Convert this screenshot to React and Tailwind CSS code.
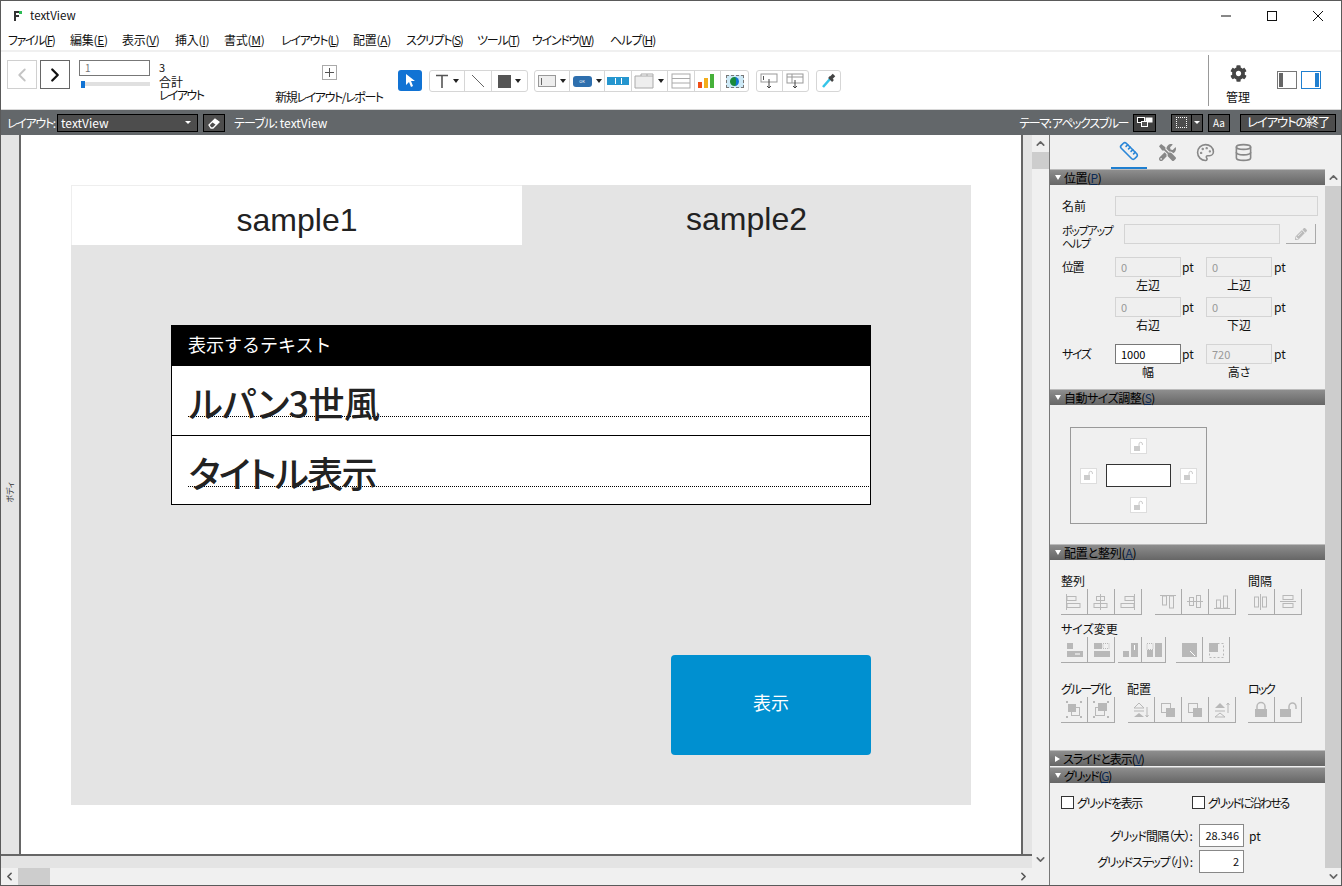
import React from "react";
import { ChevronLeft, ChevronRight, ChevronUp, ChevronDown, Ruler, Palette, Database } from "lucide-react";
import { FaCog, FaTools, FaPencilAlt } from "react-icons/fa";

const font = "font-['Noto_Sans_CJK_JP',sans-serif] [font-feature-settings:'palt']";

function Menu({ name, k, className }) {
  return (
    <span className={"shrink-0 " + className}>
      {name}(<span className="underline">{k}</span>)
    </span>
  );
}

function Caret() {
  return <span className="w-0 h-0 border-x-[3px] border-x-transparent border-t-[4px] border-t-[#222] shrink-0" />;
}

function Tool({ w, caret, children, last }) {
  return (
    <div className={"h-full flex items-center justify-center gap-[4px] " + (last ? "" : "border-r border-[#d6d6d6]")} style={{ width: w }}>
      {children}
      {caret && <Caret />}
    </div>
  );
}

function ToolGroup({ className, children }) {
  return <div className={"h-[22px] flex border border-[#d6d6d6] rounded-[3px] " + className}>{children}</div>;
}

function Section({ title, k, open = true, className = "tracking-[-0.5px]" }) {
  return (
    <div className={"h-[16px] shrink-0 border-t border-[#bbb] bg-gradient-to-b from-[#8e8e8e] to-[#666] flex items-center pl-[5px] gap-[3px] text-[12px] leading-none text-black " + className}>
      {open ? (
        <span className="w-0 h-0 border-x-[3px] border-x-transparent border-t-[5px] border-t-white" />
      ) : (
        <span className="w-0 h-0 border-y-[3px] border-y-transparent border-l-[5px] border-l-white" />
      )}
      <span>
        {title}(<span className="underline text-[#0c2a55]">{k}</span>)
      </span>
    </div>
  );
}

function Num({ value, active }) {
  return (
    <div className={"w-[66px] h-[20px] flex items-center pl-[5px] text-[11px] border " + (active ? "bg-white border-[#777] text-black" : "bg-[#efefef] border-[#d4d4d4] text-[#999]")}>
      {value}
    </div>
  );
}

function NumPair({ label, a, b, capA, capB, active }) {
  return (
    <div className="flex">
      <span className="w-[53px] pt-[4px] tracking-[-1.4px]">{label}</span>
      <div className="w-[91px]">
        <div className="flex items-center">
          <Num value={a} active={active} />
          <span className="ml-[1px]">pt</span>
        </div>
        <div className="w-[66px] text-center leading-[15px]">{capA}</div>
      </div>
      <div>
        <div className="flex items-center">
          <Num value={b} />
          <span className="ml-[2px]">pt</span>
        </div>
        <div className="w-[66px] text-center leading-[15px]">{capB}</div>
      </div>
    </div>
  );
}

function Lock() {
  return (
    <div className="w-[17px] h-[16px] bg-white border border-[#ddd] flex items-center justify-center">
      <svg width="11" height="11" viewBox="0 0 11 11">
        <rect x="1" y="5" width="6" height="5" fill="#ccc" />
        <path d="M6 5V3a1.7 1.7 0 0 1 3.4 0v1" fill="none" stroke="#ccc" />
      </svg>
    </div>
  );
}

// gray tool button with a small drawing inside
function Ico({ narrow, children }) {
  return (
    <div className={"h-[26px] border-r border-b border-[#aaa] flex items-center justify-center shrink-0 " + (narrow ? "w-[24px]" : "w-[27px]")}>
      <svg width="20" height="20" viewBox="0 0 20 20" fill="none" stroke="#b8b8b8">
        {children}
      </svg>
    </div>
  );
}

const alignIcons = [
  <><path d="M2.5 2v16" /><rect x="3" y="4.5" width="9" height="4" /><rect x="3" y="11.5" width="13" height="4" /></>,
  <><path d="M9.5 2v16" /><rect x="5.5" y="4.5" width="8" height="4" /><rect x="3" y="11.5" width="13" height="4" /></>,
  <><path d="M16.5 2v16" /><rect x="7" y="4.5" width="9" height="4" /><rect x="3" y="11.5" width="13" height="4" /></>,
  <><path d="M2 3.5h16" /><rect x="4.5" y="4" width="4" height="9" /><rect x="11.5" y="4" width="4" height="12" /></>,
  <><path d="M2 9.5h16" /><rect x="4.5" y="5.5" width="4" height="8" /><rect x="11.5" y="3.5" width="4" height="12" /></>,
  <><path d="M2 16.5h16" /><rect x="4.5" y="8" width="4" height="8" /><rect x="11.5" y="4" width="4" height="12" /></>,
];
const gapIcons = [
  <><path d="M9.5 2v16" /><rect x="3.5" y="5" width="4" height="10" /><rect x="11.5" y="5" width="4" height="10" /></>,
  <><path d="M2 9.5h16" /><rect x="5" y="3.5" width="10" height="4" /><rect x="5" y="11.5" width="10" height="4" /></>,
];
const fill = { fill: "#b8b8b8", stroke: "none" };
const sizeIcons = [
  <><rect x="3" y="3" width="6" height="6" {...fill} /><rect x="3" y="11" width="16" height="6" {...fill} /><path d="M11 14h5" stroke="#fff" /></>,
  <><rect x="3" y="3" width="8" height="6" {...fill} /><rect x="12" y="3.5" width="6" height="5" strokeDasharray="1 1" /><rect x="3" y="11" width="16" height="6" {...fill} /></>,
];
const sizeIcons2 = [
  <><rect x="3" y="11" width="6" height="6" {...fill} /><rect x="11" y="3" width="7" height="14" {...fill} /><path d="M14.5 5v5" stroke="#fff" /></>,
  <><rect x="3" y="3.5" width="6" height="6" strokeDasharray="1 1" /><rect x="3" y="10" width="6" height="7" {...fill} /><rect x="11" y="3" width="7" height="14" {...fill} /></>,
];
const sizeIcons3 = [
  <><rect x="3" y="3" width="15" height="14" {...fill} /><path d="M11 11l5 5" stroke="#fff" /></>,
  <><rect x="3" y="3" width="9" height="9" {...fill} /><rect x="3.5" y="3.5" width="14" height="14" strokeDasharray="2 2" /></>,
];
const groupIcons = [
  <><rect x="4" y="4" width="8" height="8" {...fill} /><rect x="7.5" y="7.5" width="8" height="8" /><path d="M2 2h2M16 2h2M2 17h2M16 17h2" strokeWidth="2" /></>,
  <><rect x="7" y="3" width="9" height="8" {...fill} /><rect x="4.5" y="7.5" width="9" height="8" /><path d="M2 2h2M16 2h2M2 17h2M16 17h2" strokeWidth="2" /></>,
];
const orderIcons = [
  <><path d="M3 8l5-5 5 5z" /><path d="M3 11h10" /><path d="M3 17l5-4 5 4z" {...fill} /><path d="M16 7v10M14.5 15l1.5 2 1.5-2" /></>,
  <><rect x="3.5" y="3.5" width="9" height="9" /><rect x="8" y="8" width="9" height="9" {...fill} /></>,
  <><rect x="3.5" y="3.5" width="9" height="9" /><rect x="8" y="8" width="9" height="9" {...fill} /></>,
  <><path d="M3 8l5-5 5 5z" {...fill} /><path d="M3 11h10" /><path d="M3 17l5-4 5 4z" /><path d="M16 3v10M14.5 5l1.5-2 1.5 2" /></>,
];
const lockIcons = [
  <><rect x="4" y="9" width="12" height="8" {...fill} /><path d="M6 9V6.5a4 4 0 0 1 8 0V9" strokeWidth="1.5" /></>,
  <><rect x="2" y="9" width="11" height="8" {...fill} /><path d="M11 9V6.5a3.5 3.5 0 0 1 7 0V9" strokeWidth="1.5" /></>,
];

function IcoRow({ items, narrow }) {
  return (
    <div className="flex">
      {items.map((it, i) => (
        <Ico key={i} narrow={narrow}>{it}</Ico>
      ))}
    </div>
  );
}

function VScrollBtn({ down }) {
  return (
    <div className="h-[17px] flex items-center justify-center shrink-0">
      {down ? <ChevronDown size={13} strokeWidth={3} color="#666" /> : <ChevronUp size={13} strokeWidth={3} color="#666" />}
    </div>
  );
}

function Check({ label, className }) {
  return (
    <div className="flex items-center gap-[3px]">
      <span className="w-[13px] h-[13px] bg-white border border-[#333]" />
      <span className={className}>{label}</span>
    </div>
  );
}

export default function App() {
  return (
    <div className={"w-[1342px] h-[886px] flex flex-col overflow-hidden bg-white border border-[#5a5a5a] text-[#111] " + font}>
      {/* title bar */}
      <div className="h-[29px] shrink-0 flex items-center pl-[11px]">
        <svg width="12" height="12" viewBox="0 0 12 12">
          <path d="M2 1h5v2H4v2h3v2H4v4H2z" fill="#333" />
          <rect x="7" y="1" width="3" height="3" fill="#2dbb55" />
        </svg>
        <span className="ml-[6px] text-[11.5px]">textView</span>
        <div className="ml-auto flex items-center text-black">
          <svg width="46" height="14" viewBox="0 0 46 14"><path d="M18 7h10" stroke="#111" /></svg>
          <svg width="46" height="14" viewBox="0 0 46 14"><rect x="18.5" y="2.5" width="9" height="9" fill="none" stroke="#111" /></svg>
          <svg width="46" height="14" viewBox="0 0 46 14"><path d="M18 2l10 10M28 2L18 12" stroke="#111" /></svg>
        </div>
      </div>

      {/* menu */}
      <div className="h-[20px] shrink-0 flex items-center pl-[7px] text-[12px] leading-none whitespace-nowrap">
        <Menu name="ファイル" k="F" className="w-[62px] tracking-[-1.4px]" />
        <Menu name="編集" k="E" className="w-[52px] tracking-[-0.3px]" />
        <Menu name="表示" k="V" className="w-[53px] tracking-[-0.3px]" />
        <Menu name="挿入" k="I" className="w-[49px] tracking-[-0.3px]" />
        <Menu name="書式" k="M" className="w-[57px] tracking-[-0.3px]" />
        <Menu name="レイアウト" k="L" className="w-[72px] tracking-[-1.2px]" />
        <Menu name="配置" k="A" className="w-[53px] tracking-[-0.3px]" />
        <Menu name="スクリプト" k="S" className="w-[71px] tracking-[-1.3px]" />
        <Menu name="ツール" k="T" className="w-[55px] tracking-[-1.2px]" />
        <Menu name="ウインドウ" k="W" className="w-[78px] tracking-[-1.2px]" />
        <Menu name="ヘルプ" k="H" className="tracking-[-1px]" />
      </div>

      {/* toolbar */}
      <div className="h-[60px] shrink-0 flex border-t-2 border-[#f0f0f0] border-b border-b-[#d8d8d8]">
        <div className="flex items-start pt-[8px] pl-[6px]">
          <div className="w-[30px] h-[29px] border border-[#d0d0d0] flex items-center justify-center">
            <ChevronLeft size={22} color="#c4c4c4" strokeWidth={2} />
          </div>
          <div className="ml-[3px] w-[30px] h-[29px] border border-[#666] flex items-center justify-center">
            <ChevronRight size={22} color="#111" strokeWidth={2.5} />
          </div>
        </div>
        <div className="ml-[9px] pt-[8px] w-[71px]">
          <div className="h-[16px] border border-[#777] pl-[5px] text-[10px] leading-[14px] text-[#777]">1</div>
          <div className="mt-[6px] h-[4px] bg-[#e0e0e0] relative ml-[2px]">
            <span className="absolute left-0 top-[-1px] w-[4px] h-[7px] bg-[#1173d4]" />
          </div>
        </div>
        <div className="ml-[9px] w-[116px] shrink-0 pt-[9px] text-[12px] leading-[13px]">
          <div className="text-[11px]">3</div>
          <div className="mt-[1px]">合計</div>
          <div className="tracking-[-1.6px]">レイアウト</div>
        </div>
        <div className="w-[108px] shrink-0 pt-[13px] flex flex-col items-center text-[12px]">
          <svg width="15" height="15" viewBox="0 0 15 15" fill="none">
            <rect x="0.5" y="0.5" width="14" height="14" stroke="#555" strokeDasharray="1 1" />
            <path d="M7.5 3v9M3 7.5h9" stroke="#555" />
          </svg>
          <div className="mt-[11px] leading-none whitespace-nowrap tracking-[-1.4px]">新規レイアウト/レポート</div>
        </div>

        <div className="ml-[15px] mt-[18px] w-[24px] h-[21px] bg-[#1173d4] rounded-[3px] flex items-center justify-center">
          <svg width="14" height="15" viewBox="0 0 14 15"><path d="M3 1l9 7H8l2 5-2 1-2-5-3 3z" fill="#fff" /></svg>
        </div>

        <ToolGroup className="ml-[7px] mt-[18px] w-[99px]">
          <Tool w={35} caret>
            <svg width="14" height="15" viewBox="0 0 14 15"><path d="M1 1.5h12M7 1.5V14" stroke="#555" strokeWidth="1.6" fill="none" /></svg>
          </Tool>
          <Tool w={27}>
            <svg width="14" height="14" viewBox="0 0 14 14"><path d="M1 1l12 12" stroke="#666" /></svg>
          </Tool>
          <Tool w={35} caret last>
            <span className="w-[13px] h-[13px] bg-[#555]" />
          </Tool>
        </ToolGroup>

        <ToolGroup className="ml-[6px] mt-[18px] w-[215px]">
          <Tool w={35} caret>
            <span className="w-[18px] h-[12px] bg-[#eee] border border-[#999] flex items-center pl-[2px]"><span className="w-px h-[7px] bg-[#666]" /></span>
          </Tool>
          <Tool w={36} caret>
            <span className="w-[19px] h-[11px] rounded-[3px] bg-[#2e6fae] text-white text-[4px] leading-[11px] text-center">OK</span>
          </Tool>
          <Tool w={27}>
            <span className="w-[22px] h-[8px] bg-[#2596cf] flex justify-center gap-[5px] items-center"><span className="w-px h-[6px] bg-white" /><span className="w-px h-[6px] bg-white" /></span>
          </Tool>
          <Tool w={36} caret>
            <svg width="20" height="16" viewBox="0 0 20 16"><path d="M1 3h18v12H1z" fill="#eee" stroke="#aaa" /><path d="M7 3V1h6v2M13 1h6v2" fill="none" stroke="#aaa" /></svg>
          </Tool>
          <Tool w={27}>
            <svg width="20" height="16" viewBox="0 0 20 16" fill="none" stroke="#aaa"><rect x="1" y="1" width="18" height="14" /><path d="M1 5.5h18M1 10h18" /></svg>
          </Tool>
          <Tool w={27}>
            <svg width="18" height="16" viewBox="0 0 18 16"><rect x="0" y="9" width="4" height="6" fill="#f04e16" /><rect x="6" y="5" width="4" height="10" fill="#f2ad1c" /><rect x="12" y="1" width="4" height="14" fill="#46b13a" /></svg>
          </Tool>
          <Tool w={27} last>
            <span className="w-[18px] h-[13px] bg-[#cde9f6] border border-dashed border-[#777] flex items-center justify-center">
              <span className="w-[9px] h-[9px] rounded-full bg-[#1a8a3a] border-r-[3px] border-[#1173d4]" />
            </span>
          </Tool>
        </ToolGroup>

        <ToolGroup className="ml-[7px] mt-[18px] w-[53px]">
          <Tool w={26}>
            <svg width="18" height="16" viewBox="0 0 18 16" fill="none" stroke="#999"><rect x="1" y="1" width="16" height="8" /><path d="M3.5 3v4" stroke="#555" /><path d="M9 6v9M7 13l2 2 2-2" stroke="#444" /></svg>
          </Tool>
          <Tool w={26} last>
            <svg width="18" height="16" viewBox="0 0 18 16" fill="none" stroke="#999"><rect x="1" y="1" width="16" height="9" /><path d="M1 4h16M6 1v9" /><path d="M9 7v8M7 13l2 2 2-2" stroke="#444" /></svg>
          </Tool>
        </ToolGroup>

        <ToolGroup className="ml-[7px] mt-[18px] w-[25px] items-center justify-center">
          <svg width="18" height="18" viewBox="0 0 18 18">
            <path d="M3 15l7-8" stroke="#35c5e8" strokeWidth="2.5" />
            <path d="M9 5l4 4" stroke="#444" strokeWidth="2.5" />
            <path d="M11 6l3-3" stroke="#444" strokeWidth="3.5" />
          </svg>
        </ToolGroup>

        <div className="ml-auto mt-[3px] mb-[3px] w-px bg-[#999]" />
        <div className="w-[58px] flex flex-col items-center pt-[13px] text-[12px] leading-none">
          <FaCog size={17} color="#444" />
          <span className="mt-[9px]">管理</span>
        </div>
        <div className="ml-[10px] mt-[19px] flex gap-[4px] pr-[20px]">
          <div className="w-[20px] h-[18px] border border-[#777] pl-[1px] py-[1px]"><div className="w-[4px] h-full bg-[#666]" /></div>
          <div className="w-[20px] h-[18px] border border-[#1f7fd0] pr-[1px] py-[1px] flex justify-end"><div className="w-[4px] h-full bg-[#1f7fd0]" /></div>
        </div>
      </div>

      {/* layout bar */}
      <div className="h-[25px] shrink-0 bg-[#63676a] flex items-center pl-[6px] pr-[5px] text-[12px] text-white leading-none whitespace-nowrap">
        <span className="w-[50px] tracking-[-1.3px]">レイアウト:</span>
        <div className="w-[141px] h-[18px] bg-[#4d4d4d] border border-black flex items-center pl-[3px] pr-[6px]">
          <span>textView</span>
          <span className="ml-auto w-0 h-0 border-x-[3px] border-x-transparent border-t-[3px] border-t-white" />
        </div>
        <div className="ml-[5px] w-[22px] h-[18px] bg-[#4d4d4d] border border-black flex items-center justify-center">
          <svg width="13" height="12" viewBox="0 0 13 12"><path d="M1 8l6-6 4 3-6 6H3z" fill="none" stroke="#fff" strokeWidth="1.3" /><path d="M7 2l4 3-3 3-4-3z" fill="#fff" /></svg>
        </div>
        <span className="ml-[9px]"><span className="tracking-[-0.8px]">テーブル:</span> textView</span>
        <span className="ml-auto tracking-[-1.4px]">テーマ: アペックスブルー</span>
        <div className="ml-[5px] w-[23px] h-[18px] bg-[#3f3f3f] border border-black flex items-center justify-center">
          <svg width="16" height="11" viewBox="0 0 16 11"><rect x="0.5" y="0.5" width="7" height="5" fill="#222" stroke="#fff" /><rect x="8.5" y="0.5" width="7" height="5" fill="#fff" /><rect x="4.5" y="4.5" width="6" height="5" fill="#555" stroke="#fff" /></svg>
        </div>
        <div className="ml-[15px] w-[32px] h-[18px] bg-[#4d4d4d] border border-black flex">
          <div className="w-[20px] border-r border-black flex items-center justify-center"><span className="w-[11px] h-[11px] border border-dotted border-white" /></div>
          <div className="flex-1 flex items-center justify-center"><span className="w-0 h-0 border-x-[3px] border-x-transparent border-t-[3px] border-t-white" /></div>
        </div>
        <div className="ml-[5px] w-[22px] h-[18px] bg-[#4d4d4d] border border-black flex items-center justify-center text-[10px]">Aa</div>
        <div className="ml-[10px] w-[96px] h-[18px] bg-[#4d4d4d] border border-black flex items-center justify-center text-[12.5px] tracking-[-1.2px]">レイアウトの終了</div>
      </div>

      {/* body */}
      <div className="flex-1 flex min-h-0">
        <div className="w-[1048px] flex flex-col shrink-0">
          <div className="flex-1 flex min-h-0">
            <div className="flex-1 flex flex-col min-w-0">
              <div className="flex-1 flex min-h-0 border-b-2 border-[#666]">
                <div className="w-[20px] shrink-0 bg-[#e4e4e4] border-r-2 border-[#666] flex items-center justify-center pb-[4px]">
                  <span className="text-[8px] leading-none text-[#333] [writing-mode:vertical-rl] [text-orientation:sideways] rotate-180">ボディ</span>
                </div>
                <div className="w-[1000px] shrink-0 p-[50px] bg-white">
                  {/* tab panel */}
                  <div className="w-[900px] h-[620px] bg-[#e4e4e4] flex flex-col [font-feature-settings:normal]">
                    <div className="h-[60px] flex font-['Liberation_Sans',sans-serif] text-[32px] text-[#222]">
                      <div className="w-[451px] bg-white border-t border-l border-[#eee] flex items-center justify-center pt-[8px]">sample1</div>
                      <div className="flex-1 flex items-center justify-center pt-[8px]">sample2</div>
                    </div>
                    <div className="ml-[100px] mt-[80px] w-[700px] h-[180px] border border-black bg-white flex flex-col">
                      <div className="h-[40px] bg-black text-white text-[18px] flex items-center pl-[16px] pb-[3px]">表示するテキスト</div>
                      <div className="h-[70px] border-b border-black pl-[16px] pr-px">
                        <div className="h-[51px] border-b border-dotted border-black flex items-end text-[36px] font-medium leading-none text-[#222] [font-feature-settings:'palt']">
                          <span className="translate-y-[4px] translate-x-px tracking-[-0.6px]">ルパン3世風</span>
                        </div>
                      </div>
                      <div className="flex-1 pl-[16px] pr-px">
                        <div className="h-[51px] border-b border-dotted border-black flex items-end text-[36px] font-medium leading-none text-[#222] [font-feature-settings:'palt']">
                          <span className="translate-y-[4px] translate-x-px tracking-[-1.6px]">タイトル表示</span>
                        </div>
                      </div>
                    </div>
                    <div className="ml-[600px] mt-[150px] w-[200px] h-[100px] bg-[#0090d0] rounded-[4px] text-white text-[18px] flex items-center justify-center pb-[5px]">表示</div>
                  </div>
                </div>
                <div className="flex-1 bg-[#e4e4e4] border-l-2 border-[#666]" />
              </div>
              <div className="h-[12px] shrink-0 bg-[#e4e4e4]" />
            </div>
            <div className="w-[17px] shrink-0 bg-[#f0f0f0] flex flex-col">
              <VScrollBtn />
              <div className="h-[17px] bg-[#cdcdcd]" />
              <div className="flex-1" />
              <VScrollBtn down />
            </div>
          </div>
          <div className="h-[17px] shrink-0 flex items-center bg-[#f0f0f0]">
            <div className="w-[17px] flex justify-center"><ChevronLeft size={13} strokeWidth={3} color="#555" /></div>
            <div className="w-[32px] h-full bg-[#cdcdcd]" />
            <div className="ml-auto mr-[17px] w-[17px] flex justify-center"><ChevronRight size={13} strokeWidth={3} color="#555" /></div>
          </div>
        </div>

        {/* inspector */}
        <div className="flex-1 border-l border-[#777] bg-[#f0f0f0] flex flex-col min-w-0">
          <div className="h-[34px] shrink-0 flex pl-[61px] gap-[2px]">
            <div className="w-[36px] flex items-center justify-center border-b-2 border-[#1f7fd0]"><Ruler size={20} color="#2b87d8" /></div>
            <div className="w-[36px] flex items-center justify-center"><FaTools size={17} color="#888" /></div>
            <div className="w-[36px] flex items-center justify-center"><Palette size={19} color="#888" /></div>
            <div className="w-[36px] flex items-center justify-center"><Database size={19} color="#888" /></div>
          </div>
          <div className="flex-1 flex min-h-0">
            <div className="w-[275px] shrink-0 flex flex-col text-[12px] leading-none whitespace-nowrap">
              <Section title="位置" k="P" />
              <div className="h-[204px] shrink-0 pl-[12px] pt-[11px]">
                <div className="flex items-center h-[20px]">
                  <span className="w-[53px]">名前</span>
                  <div className="w-[203px] h-[20px] bg-[#efefef] border border-[#d4d4d4]" />
                </div>
                <div className="flex mt-[8px] h-[22px]">
                  <span className="w-[62px] text-[11px] leading-[13px] tracking-[-1.3px]">ポップアップ<br />ヘルプ</span>
                  <div className="w-[156px] h-[20px] bg-[#efefef] border border-[#d4d4d4]" />
                  <div className="ml-[6px] w-[30px] h-[20px] border-r border-b border-[#aaa] flex items-center justify-center">
                    <FaPencilAlt size={12} color="#bbb" />
                  </div>
                </div>
                <div className="mt-[11px]">
                  <NumPair label="位置" a="0" b="0" capA="左辺" capB="上辺" />
                </div>
                <div className="mt-[5px]">
                  <NumPair label="" a="0" b="0" capA="右辺" capB="下辺" />
                </div>
                <div className="mt-[12px]">
                  <NumPair label="サイズ" a="1000" b="720" capA="幅" capB="高さ" active />
                </div>
              </div>

              <Section title="自動サイズ調整" k="S" />
              <div className="h-[139px] shrink-0 pl-[20px] pt-[22px]">
                <div className="w-[137px] h-[97px] border border-[#999] flex flex-col items-center pt-[10px]">
                  <Lock />
                  <div className="mt-[10px] w-full flex items-center justify-between px-[9px]">
                    <Lock />
                    <div className="w-[65px] h-[23px] bg-white border border-[#333]" />
                    <Lock />
                  </div>
                  <div className="mt-[10px]"><Lock /></div>
                </div>
              </div>

              <Section title="配置と整列" k="A" className="tracking-[-0.2px]" />
              <div className="h-[190px] shrink-0 pl-[11px] pt-[15px]">
                <div className="flex h-[14px]">
                  <span className="w-[187px]">整列</span>
                  <span>間隔</span>
                </div>
                <div className="flex">
                  <IcoRow items={alignIcons.slice(0, 3)} />
                  <div className="ml-[13px]"><IcoRow items={alignIcons.slice(3)} /></div>
                  <div className="ml-[12px]"><IcoRow items={gapIcons} /></div>
                </div>
                <div className="mt-[8px] h-[14px]">サイズ変更</div>
                <div className="flex">
                  <IcoRow items={sizeIcons} />
                  <div className="ml-[3px]"><IcoRow items={sizeIcons2} narrow /></div>
                  <div className="ml-[10px]"><IcoRow items={sizeIcons3} /></div>
                </div>
                <div className="mt-[20px] h-[14px] flex">
                  <span className="w-[66px] tracking-[-1.4px]">グループ化</span>
                  <span className="w-[121px]">配置</span>
                  <span className="tracking-[-2px]">ロック</span>
                </div>
                <div className="flex">
                  <IcoRow items={groupIcons} />
                  <div className="ml-[13px]"><IcoRow items={orderIcons} /></div>
                  <div className="ml-[12px]"><IcoRow items={lockIcons} /></div>
                </div>
              </div>

              <Section title="スライドと表示" k="V" open={false} className="tracking-[-1px]" />
              <div className="h-px" />
              <Section title="グリッド" k="G" className="tracking-[-1.3px]" />
              <div className="pl-[11px] pt-[13px]">
                <div className="flex">
                  <div className="w-[131px]"><Check label="グリッドを表示" className="tracking-[-1.4px]" /></div>
                  <Check label="グリッドに沿わせる" className="tracking-[-1.9px]" />
                </div>
                <div className="mt-[15px] flex items-center">
                  <span className="w-[131px] text-right tracking-[-0.9px]">グリッド間隔（大）:</span>
                  <div className="ml-[7px] w-[45px] h-[23px] bg-white border border-[#888] flex items-center justify-end pr-[4px] text-[11px]">28.346</div>
                  <span className="ml-[5px]">pt</span>
                </div>
                <div className="mt-[3px] flex items-center">
                  <span className="w-[131px] text-right tracking-[-1.2px]">グリッドステップ（小）:</span>
                  <div className="ml-[7px] w-[45px] h-[23px] bg-white border border-[#888] flex items-center justify-end pr-[4px] text-[11px]">2</div>
                </div>
              </div>
            </div>
            <div className="w-[17px] shrink-0 flex flex-col">
              <VScrollBtn />
              <div className="flex-1 bg-[#cdcdcd]" />
              <VScrollBtn down />
            </div>
          </div>
        </div>
      </div>
    </div>
  );
}
